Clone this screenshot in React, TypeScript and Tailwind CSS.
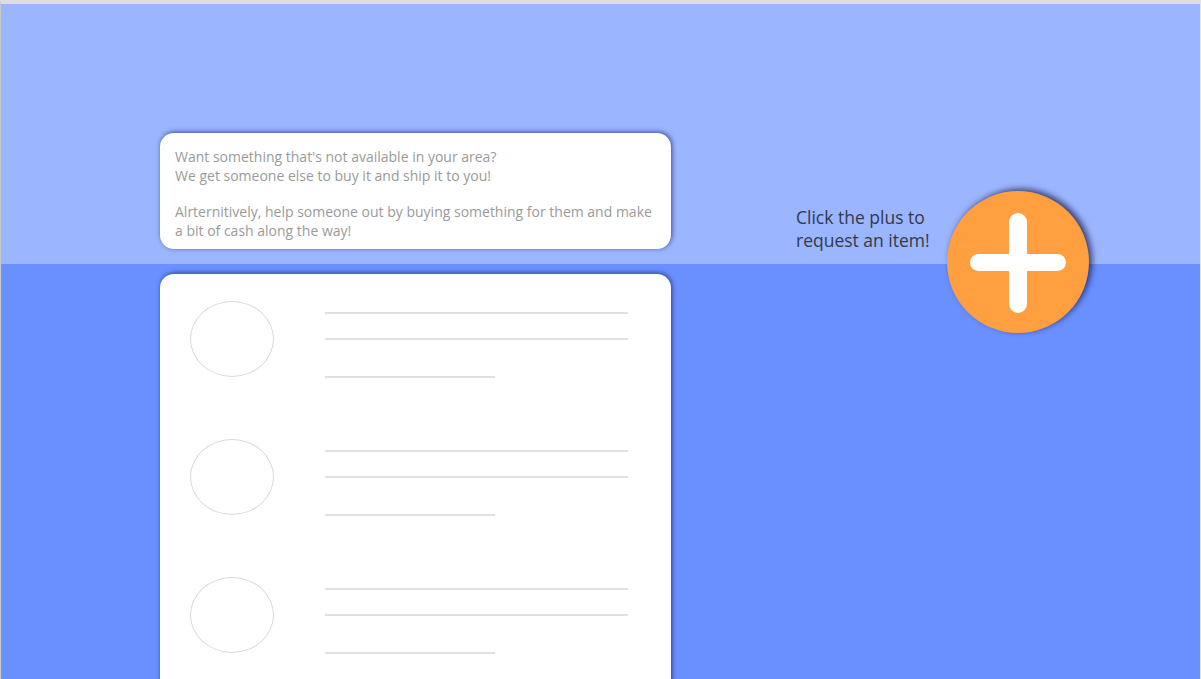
import React from "react";

function Row() {
  return (
    <div className="flex h-[138px] shrink-0">
      <div className="ml-[30px] h-[76px] w-[84px] rounded-[50%] border border-[#d9d9d9]" />
      <div className="ml-[51px] flex flex-col pt-[11px]">
        <div className="h-[2px] w-[303px] bg-[#e0e0e0]" />
        <div className="mt-[24px] h-[2px] w-[303px] bg-[#e0e0e0]" />
        <div className="mt-[36px] h-[2px] w-[170px] bg-[#e0e0e0]" />
      </div>
    </div>
  );
}

export default function App() {
  return (
    <div className="h-[679px] w-full overflow-hidden border-t-4 border-l border-r border-t-[#dedede] border-l-[#c9c9c9] border-r-[#e4e6f6] bg-[linear-gradient(#9bb5ff_0,#9bb5ff_260px,#6a90ff_260px)] font-['Open_Sans',sans-serif]">
      <div className="flex h-full">
        <div className="ml-[159px] flex w-[511px] shrink-0 flex-col pt-[129px]">
          <div className="h-[116px] shrink-0 rounded-[14px] bg-white px-[15px] pt-[14px] text-[14px] leading-[19px] text-[#9a9a9a] shadow-[1px_-1px_5px_rgba(20,30,100,0.7)]">
            <p>
              Want something that's not available in your area?
              <br />
              We get someone else to buy it and ship it to you!
            </p>
            <p className="mt-[17px]">
              Alrternitively, help someone out by buying something for them and make a bit of cash along the way!
            </p>
          </div>
          <div className="mt-[25px] flex flex-1 flex-col rounded-t-[14px] bg-white pt-[27px] shadow-[1px_-1px_5px_rgba(20,30,100,0.7)]">
            <Row />
            <Row />
            <Row />
          </div>
        </div>
        <div className="ml-[125px] flex items-start self-start pt-[187px]">
          <div className="mt-[15px] whitespace-nowrap text-[17.5px] leading-[23px] text-[#333a48]">
            Click the plus to
            <br />
            request an item!
          </div>
          <div className="relative ml-[17px] h-[142px] w-[142px] shrink-0 rounded-full bg-[#ff9f40] shadow-[3px_-2px_6px_rgba(0,0,40,0.65)]">
            <div className="absolute left-[62px] top-[22px] h-[100px] w-[18px] rounded-full bg-white" />
            <div className="absolute left-[23px] top-[63px] h-[17px] w-[96px] rounded-full bg-white" />
          </div>
        </div>
      </div>
    </div>
  );
}
